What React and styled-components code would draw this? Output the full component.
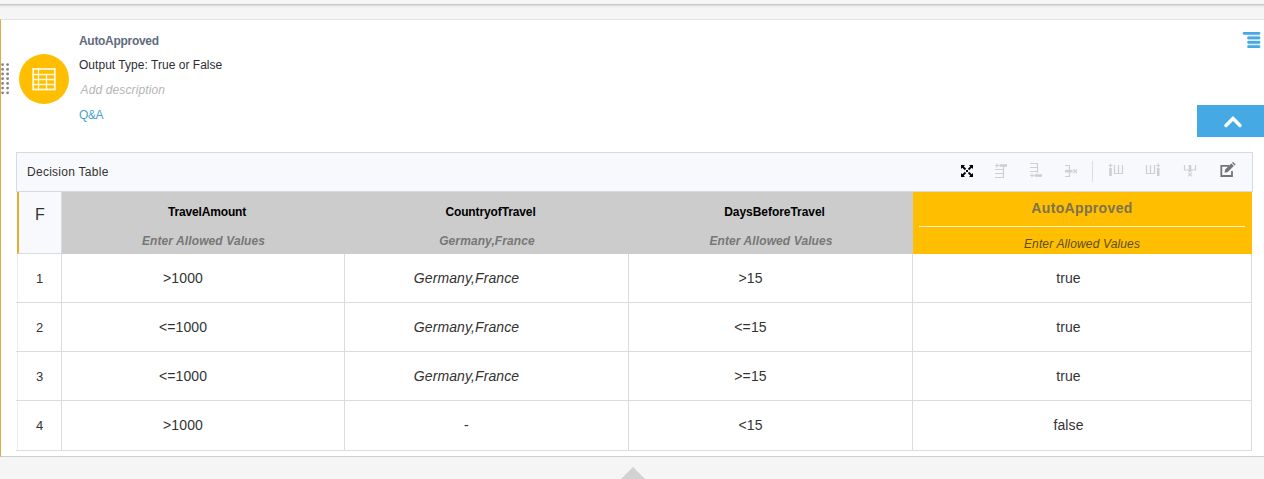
import React from 'react';
import styled, { createGlobalStyle } from 'styled-components';

const Global = createGlobalStyle`
  * { box-sizing: border-box; }
  body { margin: 0; background: #f5f5f5; overflow: hidden; font-family: "Liberation Sans", Arial, sans-serif; font-size: 12px; color: #333; }
`;

const Page = styled.div`
  height: 479px;
  display: flex;
  flex-direction: column;
`;
const TopEdge = styled.div`
  height: 5px;
  margin-bottom: 14px;
  border-bottom: 1px solid #c9c9c9;
  box-shadow: 0 1px 2px #d4d4d4;
`;
const Panel = styled.section`
  height: 438px;
  background: #fff;
  border-top: 1px solid #e3e3e3;
  border-bottom: 1px solid #cfcfcf;
  border-left: 1px solid #e3a844;
  display: flex;
  flex-direction: column;
`;
const Header = styled.header`
  height: 132px;
  display: flex;
`;
const Grip = styled.div`
  width: 9px;
  margin: 43px 9px 0 0;
  svg { display: block; }
`;
const Badge = styled.div`
  width: 50px;
  height: 50px;
  margin-top: 34px;
  border-radius: 50%;
  background: #ffbf00;
  display: flex;
  svg { margin: 14px 0 0 13px; }
`;
const Info = styled.div`
  flex: 1;
  padding: 12px 0 0 10px;
`;
const InfoLine = styled.div`
  height: ${p => p.$h || 25}px;
  line-height: 18px;
  color: ${p => p.$color || '#2d2d35'};
  font-weight: ${p => (p.$bold ? 700 : 400)};
  font-style: ${p => (p.$italic ? 'italic' : 'normal')};
  padding-left: ${p => p.$indent || 0}px;
  letter-spacing: ${p => p.$ls || 0}px;
`;
const Side = styled.div`
  width: 67px;
  display: flex;
  flex-direction: column;
  align-items: flex-end;
`;
const MenuIcon = styled.div`
  height: 85px;
  padding: 11px 3px 0 0;
  svg { display: block; }
`;
const Collapse = styled.button`
  width: 67px;
  height: 32px;
  padding: 0 0 0 4px;
  border: 0;
  background: #45aae3;
  display: flex;
  align-items: center;
  justify-content: center;
`;
const Box = styled.div`
  width: 1237px;
  margin-left: 15px;
`;
const Toolbar = styled.div`
  height: 40px;
  background: #f8f9fc;
  border: 1px solid #d6dae5;
  display: flex;
  align-items: center;
  padding: 0 14px 0 10px;
`;
const ToolbarTitle = styled.div`
  flex: 1;
  letter-spacing: 0.27px;
`;
const Tools = styled.div`
  height: 38px;
  svg { display: block; }
`;
const Table = styled.div`
  width: 1236px;
`;
const Row = styled.div`
  display: grid;
  grid-template-columns: 46px 283px 284px 284px 339px;
  height: ${p => p.$h}px;
  border-bottom: ${p => (p.$line ? '1px solid #dcdcdc' : '0')};
`;
const Corner = styled.div`
  margin-left: 1px;
  border-left: 2px solid #e8ab2e;
  border-right: 1px solid #dcdcdc;
  border-bottom: 1px solid #dcdcdc;
  background: #f8f9fc;
  font-size: 16px;
  line-height: 20px;
  padding-top: 13px;
  text-align: center;
`;
const Head = styled.div`
  background: #ccc;
  color: #000;
  font-weight: 700;
  text-align: center;
  padding-top: 12px;
`;
const HeadName = styled.div`
  height: 29px;
  line-height: 16px;
  padding-left: 7px;
  letter-spacing: ${p => p.$ls}px;
`;
const HeadValues = styled.div`
  line-height: 16px;
  font-style: italic;
  color: #777;
  letter-spacing: 0.1px;
`;
const OutHead = styled.div`
  background: #ffbf00;
  text-align: center;
  padding: 6px 7px 0 6px;
`;
const OutName = styled.div`
  height: 29px;
  line-height: 20px;
  border-bottom: 1px solid #fff3cc;
  color: #7d7250;
  font-size: 14px;
  font-weight: 700;
  letter-spacing: 0.35px;
`;
const OutValues = styled.div`
  padding-top: 9px;
  line-height: 16px;
  font-style: italic;
  color: #5d4d1a;
  letter-spacing: 0.15px;
`;
const Num = styled.div`
  margin-left: 1px;
  border-left: 1px solid #ececec;
  border-right: 1px solid #dcdcdc;
  display: flex;
  align-items: center;
  justify-content: center;
  font-size: 13px;
`;
const Cell = styled.div`
  border-right: 1px solid #dcdcdc;
  line-height: 48px;
  text-align: center;
  padding-right: ${p => p.$shift}px;
  font-size: 14px;
  letter-spacing: 0.1px;
  font-style: ${p => (p.$italic ? 'italic' : 'normal')};
`;
const Footer = styled.footer`
  display: flex;
  justify-content: center;
  padding: 10px 0 0 2px;
  svg { display: block; }
`;

const columns = [
  ['TravelAmount', 'Enter Allowed Values', -0.15],
  ['CountryofTravel', 'Germany,France', -0.12],
  ['DaysBeforeTravel', 'Enter Allowed Values', -0.05],
];
const rows = [
  ['>1000', 'Germany,France', '>15', 'true'],
  ['<=1000', 'Germany,France', '<=15', 'true'],
  ['<=1000', 'Germany,France', '>=15', 'true'],
  ['>1000', '-', '<15', 'false'],
];

const GripDots = () => (
  <svg width="9" height="32" fill="#858585">
    {[0, 1, 2, 3, 4, 5, 6].flatMap(i => [
      <circle key={`a${i}`} cx="1.6" cy={1.6 + i * 4.7} r="1.4" />,
      <circle key={`b${i}`} cx="6.6" cy={1.6 + i * 4.7} r="1.4" />,
    ])}
  </svg>
);

const TableGlyph = () => (
  <svg width="24" height="23" fill="none" stroke="#fff8e0">
    <rect x="1.2" y="1" width="21.6" height="20.5" strokeWidth="1.8" />
    <path d="M1 6.500H23M1 11.500H23M1 16.500H23M6.500 1V22M14.500 6.500V22" strokeWidth="1.3" />
  </svg>
);

const ToolIcons = () => (
  <svg width="285" height="38" fill="none" stroke="#cfcfd2" strokeWidth="1.2">
    <g stroke="#000">
      <path d="M8.500 12.500l4 4M19.500 12.500l-4 4M8.500 23.500l4-4M19.500 23.500l-4-4" strokeWidth="1.8" />
      <path d="M8 12h4l-4 4zM20 12h-4l4 4zM8 24h4l-4-4zM20 24h-4l4-4z" fill="#000" stroke="none" />
      <path d="M13 17h2v2h-2z" fill="#000" stroke="none" />
    </g>
    <path d="M42 12.500h4M44 10.500v4M42 16.500h8.500M42 20.500h8.500M42 24.500h8.500V12" />
    <path d="M46.500 12.500h7.500" strokeWidth="2.6" />
    <path d="M77 10.500h8M77 14.500h8M77 18.500h8M84.500 10v10M77 22.500h4M79 20.500v4" />
    <path d="M81.500 22.500h7.500" strokeWidth="2.600" />
    <path d="M112 12.500h4.500v11H112M120.300 16.300l3.700 3.700M124 16.300l-3.700 3.700" />
    <path d="M112 18.200h7.500" strokeWidth="2.600" />
    <path d="M139.500 8V29" stroke="#dcdee2" strokeWidth="1" />
    <path d="M155.500 12.500h4M157.500 10.500v4M161.500 12v8.500h8V12M165.500 12v8.500" />
    <path d="M157.500 15v8" strokeWidth="2.600" />
    <path d="M193.500 12v8.500h8V12M197.500 12v8.500M203.200 12.500h4M205.200 10.500v4" />
    <path d="M205.200 15v8" strokeWidth="2.600" />
    <path d="M231.500 12v5h11v-5M235.200 19.600l3.700 3.700M238.900 19.600l-3.700 3.700" />
    <path d="M237 12v7" strokeWidth="2.600" />
    <g stroke="#757575">
      <path d="M276 12.800h-7.700v10.200h10.700v-5" strokeWidth="1.800" />
      <path d="M271.500 19.800l.7-3.300 6-6 2.600 2.600-6 6zM278.900 9.800l1.200-.9 2.500 2.500-1.100 1z" fill="#757575" stroke="none" />
    </g>
  </svg>
);

export default function App() {
  return (
    <Page>
      <Global />
      <TopEdge />
      <Panel>
        <Header>
          <Grip><GripDots /></Grip>
          <Badge><TableGlyph /></Badge>
          <Info>
            <InfoLine $h={24} $bold $color="#5f6b7e" $ls={-0.3}>AutoApproved</InfoLine>
            <InfoLine $ls={0.03}>Output Type: True or False</InfoLine>
            <InfoLine $italic $indent={1.5} $color="#b5b5b5" $ls={0.13}>Add description</InfoLine>
            <InfoLine $color="#489fd0" $ls={-0.4}>Q&amp;A</InfoLine>
          </Info>
          <Side>
            <MenuIcon>
              <svg width="19" height="19" stroke="#48a8df" strokeWidth="2.8" strokeLinecap="round">
                <path d="M6 4H18V16H6z" fill="#d5eefa" stroke="none" />
                <path d="M2 2.300H17M6.500 6.900H17M6.500 11.300H17M6.500 15.700H17" />
              </svg>
            </MenuIcon>
            <Collapse>
              <svg width="20" height="13" fill="none" stroke="#fff" strokeWidth="3.500" strokeLinecap="round">
                <path d="M3 10.500L10 3.500L17 10.500" />
              </svg>
            </Collapse>
          </Side>
        </Header>
        <Box>
          <Toolbar>
            <ToolbarTitle>Decision Table</ToolbarTitle>
            <Tools><ToolIcons /></Tools>
          </Toolbar>
          <Table>
            <Row $h={62}>
              <Corner>F</Corner>
              {columns.map(([name, values, ls]) => (
                <Head key={name}>
                  <HeadName $ls={ls}>{name}</HeadName>
                  <HeadValues>{values}</HeadValues>
                </Head>
              ))}
              <OutHead>
                <OutName>AutoApproved</OutName>
                <OutValues>Enter Allowed Values</OutValues>
              </OutHead>
            </Row>
            {rows.map((row, i) => (
              <Row key={i} $line $h={i === 3 ? 50 : 49}>
                <Num>{i + 1}</Num>
                {row.map((value, j) => (
                  <Cell key={j} $shift={j === 3 ? 27 : 40} $italic={j === 1 && value !== '-'}>{value}</Cell>
                ))}
              </Row>
            ))}
          </Table>
        </Box>
      </Panel>
      <Footer>
        <svg width="24" height="12"><path d="M12 0L24 12H0z" fill="#d2d2d2" /></svg>
      </Footer>
    </Page>
  );
}
